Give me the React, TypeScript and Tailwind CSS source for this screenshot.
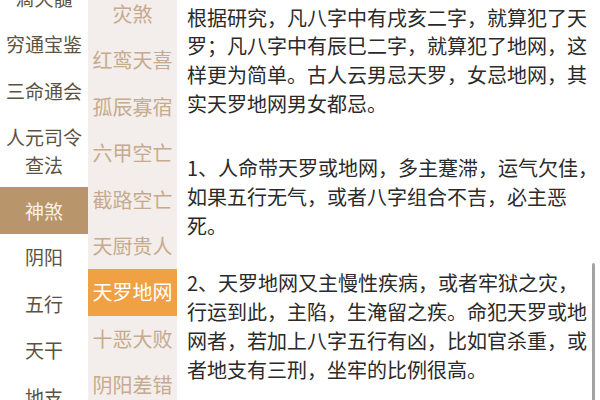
const FONT = "font-['Noto_Sans_CJK_SC','Noto_Sans',sans-serif]";

const books = [
  { label: ["滴天髓"] },
  { label: ["穷通宝鉴"] },
  { label: ["三命通会"] },
  { label: ["人元司令", "查法"] },
  { label: ["神煞"], active: true },
  { label: ["阴阳"] },
  { label: ["五行"] },
  { label: ["天干"] },
  { label: ["地支"] },
];

const topics = [
  { name: "灾煞" },
  { name: "红鸾天喜" },
  { name: "孤辰寡宿" },
  { name: "六甲空亡" },
  { name: "截路空亡" },
  { name: "天厨贵人" },
  { name: "天罗地网", active: true },
  { name: "十恶大败" },
  { name: "阴阳差错" },
];

export default function App() {
  return (
    <div className={`relative flex h-[400px] w-[600px] overflow-hidden bg-white ${FONT}`}>
      {/* 左侧书目 */}
      <div className="w-[88px] shrink-0 bg-white">
        <div className="-mt-[25.6px] flex flex-col">
          {books.map((b) => (
            <div
              key={b.label.join("")}
              className={`flex flex-col items-center py-[9.5px] text-[19px] leading-[27.4px] ${
                b.active ? "bg-[#b8956b] text-[#f8f1e8]" : "text-[#5c5240]"
              }`}
            >
              {b.label.map((l) => (
                <span key={l}>{l}</span>
              ))}
            </div>
          ))}
        </div>
      </div>

      {/* 中间分类 */}
      <div className="w-[89px] shrink-0 bg-[#f3eeeb]">
        <div className="-mt-[9.2px] flex flex-col">
          {topics.map((t) => (
            <div
              key={t.name}
              className={`flex h-[46.4px] items-center justify-center text-[20px] ${
                t.active ? "bg-[#f0a143] text-white" : "text-[#c6aa8e]"
              }`}
            >
              {t.name}
            </div>
          ))}
        </div>
      </div>

      {/* 正文 */}
      <div className="flex-1 pl-[10px] pt-[3.5px]">
        <div className="flex w-[404px] flex-col text-[20px] leading-[28.7px] text-[#2a2a2a]">
          <p>
            根据研究，凡八字中有戌亥二字，就算犯了天罗；凡八字中有辰巳二字，就算犯了地网，这样更为简单。古人云男忌天罗，女忌地网，其实天罗地网男女都忌。
          </p>
          <p className="mt-[36px]">
            1、人命带天罗或地网，多主蹇滞，运气欠佳
            {/* 行尾标点悬挂 */}
            <span className="tracking-[-10px]">，</span>
            如果五行无气，或者八字组合不吉，必主恶死。
          </p>
          <p className="mt-[29px]">
            2、天罗地网又主慢性疾病，或者牢狱之灾，行运到此，主陷，生淹留之疾。命犯天罗或地网者，若加上八字五行有凶，比如官杀重，或者地支有三刑，坐牢的比例很高。
          </p>
        </div>
      </div>

      {/* 滚动条 */}
      <div className="absolute right-[5px] top-[263px] h-[140px] w-[3px] rounded-full bg-[#a3a3a3]" />
    </div>
  );
}
